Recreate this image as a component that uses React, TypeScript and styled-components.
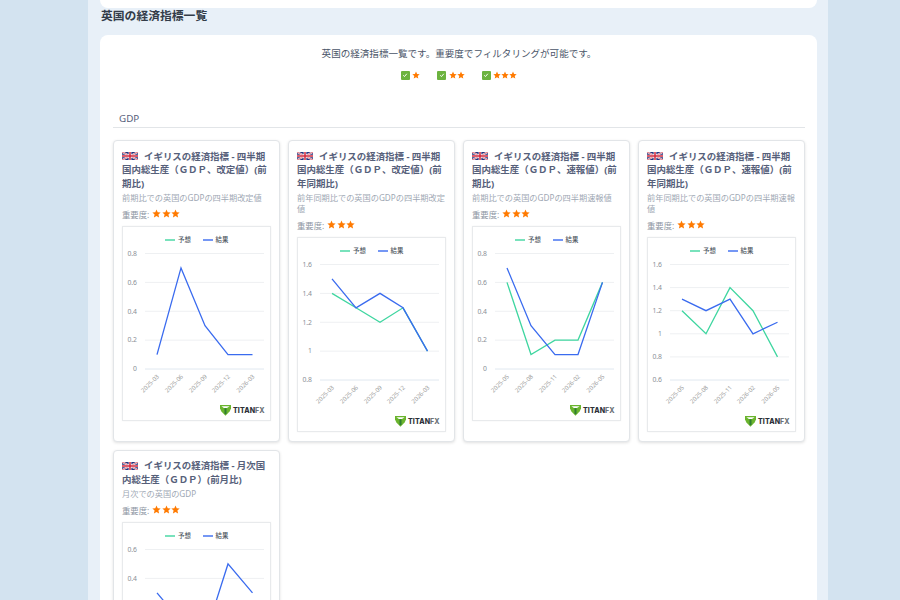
import { FC } from 'react';
import styled, { createGlobalStyle } from 'styled-components';

const GlobalStyle = createGlobalStyle`
    html, body {
        margin: 0;
        height: 600px;
        overflow: hidden;
        background: #d3e3f0;
        font-family: "Noto Sans", "Noto Sans CJK JP", sans-serif;
    }
`

const Main = styled.main`
    width: 740px;
    height: 600px;
    margin-left: 88px;
    padding: 0 11px 0 12px;
    box-sizing: border-box;
    background: #e8f0f8;
    overflow: hidden;
`

const TopStrip = styled.div`
    height: 8px;
    background: #fff;
    border-radius: 0 0 8px 8px;
`

const Heading = styled.h2`
    margin: 0;
    height: 27px;
    padding-left: 1px;
    font-size: 11.8px;
    line-height: 15px;
    font-weight: 700;
    color: #333c49;
`

const Panel = styled.section`
    background: #fff;
    border-radius: 8px;
    padding: 12px 12px 0 13px;
`

const Intro = styled.p`
    margin: 0;
    text-align: center;
    font-size: 9.55px;
    line-height: 13px;
    color: #4a5568;
`

const FilterRow = styled.div`
    display: flex;
    justify-content: center;
    gap: 17px;
    margin-top: 8px;
    height: 14px;
`

const FilterItem = styled.label`
    display: flex;
    align-items: center;
    gap: 2.5px;
`

const CheckBox = styled.span`
    display: flex;
    align-items: center;
    justify-content: center;
    width: 9px;
    height: 9px;
    border-radius: 1px;
    background: #6cb33f;
`

const Stars = styled.span<{ $size: number; $gap: number }>`
    display: inline-flex;
    gap: ${p => p.$gap}px;
    color: #ff7a00;
    svg {
        width: ${p => p.$size}px;
        height: ${p => p.$size}px;
        display: block;
    }
`

const SectionTitle = styled.h3`
    margin: 30px 0 12px;
    padding: 0 0 1px 6px;
    border-bottom: 1px solid #e2e5e8;
    font-size: 9.8px;
    line-height: 14px;
    font-weight: 400;
    color: #56607a;
`

const CardGrid = styled.div`
    display: grid;
    grid-template-columns: repeat(4, 167px);
    gap: 8px;
`

const Card = styled.article`
    box-sizing: border-box;
    padding: 8.5px 8px 9px;
    border: 1px solid #e2e5e8;
    border-radius: 4px;
    background: #fff;
    box-shadow: 0 1px 3px rgba(0, 0, 0, 0.12);
`

const CardTitle = styled.h4`
    margin: 0;
    font-size: 9.45px;
    line-height: 13.5px;
    font-weight: 700;
    color: #56607a;
`

const Flag = styled.svg`
    width: 16px;
    height: 8px;
    margin-right: 6px;
    vertical-align: -0.5px;
`

const CardText = styled.p`
    margin: 2px 0 0;
    font-size: 8.2px;
    line-height: 11px;
    color: #a0a8b4;
`

const Importance = styled.div`
    display: flex;
    align-items: center;
    gap: 3px;
    margin-top: 4px;
    height: 13px;
    font-size: 8.4px;
    color: #8e96a3;
`

const ChartBox = styled.div`
    margin-top: 5.5px;
    width: 149px;
    height: 195px;
    box-sizing: border-box;
    border: 1px solid #e8eaec;
    box-shadow: 0 0 2px rgba(0, 0, 0, 0.05);
    svg {
        display: block;
    }
`

type ChartData = {
    axis: string[]
    labels: string[]
    forecast?: number[]
    result: number[]
}

const xs = [34, 58, 82, 105, 129.5]
const GREEN = '#3fd6a0'
const BLUE = '#3a6bef'

const StarIcon = () => (
    <svg viewBox="0 0 24 24" fill="currentColor">
        <path d="M12 1.5l3.2 7.2 7.8.8-5.9 5.2 1.8 7.8L12 18.4l-6.9 4.1 1.8-7.8L1 9.5l7.8-.8z" />
    </svg>
)

const StarRating: FC<{ count: number; size?: number; gap?: number }> = ({ count, size = 9, gap = 0.5 }) => (
    <Stars $size={size} $gap={gap}>
        {Array.from({ length: count }).map((_, i) => <StarIcon key={i} />)}
    </Stars>
)

const UnionJack = () => (
    <Flag viewBox="0 0 32 16" preserveAspectRatio="none">
        <rect width="32" height="16" fill="#22347e" />
        <path d="M0 0L32 16M32 0L0 16" stroke="#fff" strokeWidth="3.6" />
        <path d="M0 0L32 16M32 0L0 16" stroke="#d0283c" strokeWidth="1.4" />
        <path d="M16 0V16M0 8H32" stroke="#fff" strokeWidth="5.4" />
        <path d="M16 0V16M0 8H32" stroke="#d0283c" strokeWidth="3" />
    </Flag>
)

const TitanLogo = () => (
    <g transform="translate(97 178)">
        <path d="M0 0H11V3.6L9.6 6.6 5.5 10.8 1.4 6.6 0 3.6Z" fill="#6ab42d" />
        <path d="M1.4 1.3H9.6L7 3H3.9Z" fill="#fff" />
        <path d="M4.5 3.2H6.5V8.6L5.5 9.6 4.5 8.6Z" fill="#2f7d32" />
        <text x="13" y="7.8" fontSize="7" fontWeight="800" letterSpacing="0.1" fontFamily="Inter, sans-serif" fill="#2c3138">
            TITAN<tspan fill="#6d7378">FX</tspan>
        </text>
    </g>
)

const LineChart: FC<{ data: ChartData }> = ({ data }) => {
    const top = 26.5
    const bottom = 142
    const steps = data.axis.length - 1
    const max = parseFloat(data.axis[0])
    const min = parseFloat(data.axis[steps])
    const toY = (v: number) => top + ((max - v) / (max - min)) * (bottom - top)
    const toPoints = (vals: number[]) => vals.map((v, i) => `${xs[i]},${toY(v)}`).join(' ')

    return (
        <svg width="147" height="193" viewBox="0 0 147 193" fontFamily="Noto Sans, Noto Sans CJK JP, sans-serif">
            <line x1="42" x2="52" y1="13" y2="13" stroke={GREEN} strokeWidth="1.4" />
            <text x="55" y="15.3" fontSize="6.4" fontWeight="500" fill="#4f5661">予想</text>
            <line x1="80" x2="90" y1="13" y2="13" stroke={BLUE} strokeWidth="1.4" />
            <text x="92.5" y="15.3" fontSize="6.4" fontWeight="500" fill="#4f5661">結果</text>

            {data.axis.map((label, i) => {
                const y = top + (i * (bottom - top)) / steps
                return (
                    <g key={label}>
                        <line x1="22" x2="141" y1={y} y2={y} stroke={i === steps ? '#e0e8f0' : '#eef0f2'} strokeWidth="1" />
                        <text x="14" y={y + 2.3} fontSize="6.8" textAnchor="end" fill="#8a8f96">{label}</text>
                    </g>
                )
            })}

            {data.labels.map((label, i) => (
                <text
                    key={label}
                    x={xs[i] + 2.5}
                    y={bottom + 8}
                    fontSize="6"
                    textAnchor="end"
                    fill="#9a9a9a"
                    transform={`rotate(-45 ${xs[i] + 2.5} ${bottom + 8})`}
                >
                    {label}
                </text>
            ))}

            {data.forecast && <polyline points={toPoints(data.forecast)} fill="none" stroke={GREEN} strokeWidth="1.3" />}
            <polyline points={toPoints(data.result)} fill="none" stroke={BLUE} strokeWidth="1.3" />
            <TitanLogo />
        </svg>
    )
}

const LABELS_A = ['2025-03', '2025-06', '2025-09', '2025-12', '2026-03']
const LABELS_B = ['2025-05', '2025-08', '2025-11', '2026-02', '2026-05']

const CARDS: { title: string; desc: string; data: ChartData }[] = [
    {
        title: 'イギリスの経済指標 - 四半期国内総生産（ＧＤＰ、改定値）(前期比)',
        desc: '前期比での英国のGDPの四半期改定値',
        data: { axis: ['0.8', '0.6', '0.4', '0.2', '0'], labels: LABELS_A, result: [0.1, 0.7, 0.3, 0.1, 0.1] },
    },
    {
        title: 'イギリスの経済指標 - 四半期国内総生産（ＧＤＰ、改定値）(前年同期比)',
        desc: '前年同期比での英国のGDPの四半期改定値',
        data: { axis: ['1.6', '1.4', '1.2', '1', '0.8'], labels: LABELS_A, forecast: [1.4, 1.3, 1.2, 1.3, 1], result: [1.5, 1.3, 1.4, 1.3, 1] },
    },
    {
        title: 'イギリスの経済指標 - 四半期国内総生産（ＧＤＰ、速報値）(前期比)',
        desc: '前期比での英国のGDPの四半期速報値',
        data: { axis: ['0.8', '0.6', '0.4', '0.2', '0'], labels: LABELS_B, forecast: [0.6, 0.1, 0.2, 0.2, 0.6], result: [0.7, 0.3, 0.1, 0.1, 0.6] },
    },
    {
        title: 'イギリスの経済指標 - 四半期国内総生産（ＧＤＰ、速報値）(前年同期比)',
        desc: '前年同期比での英国のGDPの四半期速報値',
        data: { axis: ['1.6', '1.4', '1.2', '1', '0.8', '0.6'], labels: LABELS_B, forecast: [1.2, 1, 1.4, 1.2, 0.8], result: [1.3, 1.2, 1.3, 1, 1.1] },
    },
    {
        title: 'イギリスの経済指標 - 月次国内総生産（ＧＤＰ）(前月比)',
        desc: '月次での英国のGDP',
        data: { axis: ['0.6', '0.4', '0.2', '0', '-0.2'], labels: LABELS_A, result: [0.3, 0.1, 0, 0.5, 0.3] },
    },
]

const App: FC = () => {
    return (
        <Main>
            <GlobalStyle />
            <TopStrip />
            <Heading>英国の経済指標一覧</Heading>
            <Panel>
                <Intro>英国の経済指標一覧です。重要度でフィルタリングが可能です。</Intro>
                <FilterRow>
                    {[1, 2, 3].map(count => (
                        <FilterItem key={count}>
                            <CheckBox>
                                <svg width="6" height="6" viewBox="0 0 10 10">
                                    <path d="M2 5.5L4.2 7.5 8 3" fill="none" stroke="#fff" strokeWidth="1.6" />
                                </svg>
                            </CheckBox>
                            <StarRating count={count} size={8} gap={0} />
                        </FilterItem>
                    ))}
                </FilterRow>
                <SectionTitle>GDP</SectionTitle>
                <CardGrid>
                    {CARDS.map(card => (
                        <Card key={card.title}>
                            <CardTitle><UnionJack />{card.title}</CardTitle>
                            <CardText>{card.desc}</CardText>
                            <Importance>重要度: <StarRating count={3} /></Importance>
                            <ChartBox><LineChart data={card.data} /></ChartBox>
                        </Card>
                    ))}
                </CardGrid>
            </Panel>
        </Main>
    )
}

export default App
